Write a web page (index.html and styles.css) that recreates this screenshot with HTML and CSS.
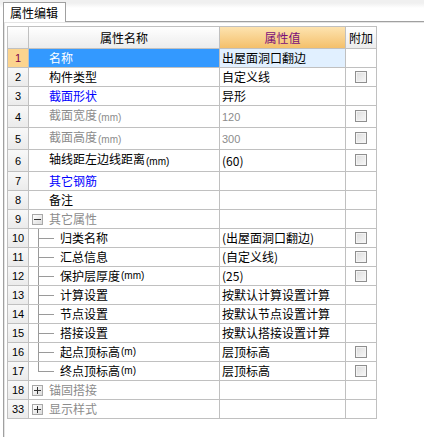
FILE: index.html
```html
<!DOCTYPE html>
<html lang="zh">
<head>
<meta charset="utf-8">
<title>属性编辑</title>
<link rel="stylesheet" href="styles.css">
</head>
<body>
<div class="tabbar">
  <div class="tab">属性编辑</div>
</div>
<div class="panel">
  <table class="grid">
    <colgroup>
      <col class="c-num"><col class="c-name"><col class="c-val"><col class="c-add">
    </colgroup>
    <thead>
      <tr>
        <th class="num"></th>
        <th class="hname">属性名称</th>
        <th class="hval">属性值</th>
        <th class="hadd">附加</th>
      </tr>
    </thead>
    <tbody>
      <tr class="sel">
        <td class="num">1</td><td class="name">名称</td><td class="val">出屋面洞口翻边</td><td class="add"></td>
      </tr>
      <tr>
        <td class="num">2</td><td class="name">构件类型</td><td class="val">自定义线</td><td class="add"><span class="chk"></span></td>
      </tr>
      <tr>
        <td class="num">3</td><td class="name blue">截面形状</td><td class="val">异形</td><td class="add"></td>
      </tr>
      <tr>
        <td class="num">4</td><td class="name grey">截面宽度<span class="unit">(mm)</span></td><td class="val grey">120</td><td class="add"><span class="chk"></span></td>
      </tr>
      <tr>
        <td class="num">5</td><td class="name grey">截面高度<span class="unit">(mm)</span></td><td class="val grey">300</td><td class="add"><span class="chk"></span></td>
      </tr>
      <tr>
        <td class="num">6</td><td class="name">轴线距左边线距离<span class="unit">(mm)</span></td><td class="val paren">(60)</td><td class="add"><span class="chk"></span></td>
      </tr>
      <tr>
        <td class="num">7</td><td class="name blue">其它钢筋</td><td class="val"></td><td class="add"></td>
      </tr>
      <tr>
        <td class="num">8</td><td class="name">备注</td><td class="val"></td><td class="add"></td>
      </tr>
      <tr>
        <td class="num">9</td><td class="group"><span class="box minus"></span><span class="grey">其它属性</span></td><td class="val"></td><td class="add"></td>
      </tr>
      <tr>
        <td class="num">10</td><td class="child"><span class="branch"></span>归类名称</td><td class="val paren">(出屋面洞口翻边)</td><td class="add"><span class="chk"></span></td>
      </tr>
      <tr>
        <td class="num">11</td><td class="child"><span class="branch"></span>汇总信息</td><td class="val paren">(自定义线)</td><td class="add"><span class="chk"></span></td>
      </tr>
      <tr>
        <td class="num">12</td><td class="child"><span class="branch"></span>保护层厚度<span class="unit">(mm)</span></td><td class="val paren">(25)</td><td class="add"><span class="chk"></span></td>
      </tr>
      <tr>
        <td class="num">13</td><td class="child"><span class="branch"></span>计算设置</td><td class="val">按默认计算设置计算</td><td class="add"></td>
      </tr>
      <tr>
        <td class="num">14</td><td class="child"><span class="branch"></span>节点设置</td><td class="val">按默认节点设置计算</td><td class="add"></td>
      </tr>
      <tr>
        <td class="num">15</td><td class="child"><span class="branch"></span>搭接设置</td><td class="val">按默认搭接设置计算</td><td class="add"></td>
      </tr>
      <tr>
        <td class="num">16</td><td class="child"><span class="branch"></span>起点顶标高<span class="unit">(m)</span></td><td class="val">层顶标高</td><td class="add"><span class="chk"></span></td>
      </tr>
      <tr>
        <td class="num">17</td><td class="child"><span class="branch last"></span>终点顶标高<span class="unit">(m)</span></td><td class="val">层顶标高</td><td class="add"><span class="chk"></span></td>
      </tr>
      <tr>
        <td class="num">18</td><td class="group"><span class="box plus"></span><span class="grey">锚固搭接</span></td><td class="val"></td><td class="add"></td>
      </tr>
      <tr>
        <td class="num">33</td><td class="group"><span class="box plus"></span><span class="grey">显示样式</span></td><td class="val"></td><td class="add"></td>
      </tr>
    </tbody>
  </table>
</div>
</body>
</html>
```

FILE: styles.css
```css
html, body {
  margin: 0;
  padding: 0;
  background: #ffffff;
}

body {
  width: 424px;
  height: 437px;
  overflow: hidden;
  font-family: "Liberation Sans", "Noto Sans CJK SC", sans-serif;
  font-size: 12px;
  color: #000000;
}

.tabbar {
  height: 21px;
  background: linear-gradient(#f0f0f0 0, #f0f0f0 3px, #ffffff 8px);
  display: flex;
  align-items: flex-end;
  padding-left: 3px;
}

.tab {
  height: 20px;
  box-sizing: border-box;
  width: 63px;
  border: 1px solid #a0a0a0;
  border-bottom: none;
  background: #ffffff;
  font-family: "Noto Sans CJK SC", sans-serif;
  font-size: 12px;
  line-height: 19px;
  padding-left: 6px;
  position: relative;
  top: 1px;
}

.panel {
  margin-left: 3px;
  border-top: 1px solid #a0a0a0;
  border-left: 1px solid #a0a0a0;
  box-shadow: inset 1px 1px 0 #e4e4e4;
  padding: 4px 0 0 3px;
  height: 420px;
}

.grid {
  table-layout: fixed;
  border-collapse: separate;
  border-spacing: 1px;
  background: #c0c0c0;
  width: 370px;
}

.c-num { width: 20px; }
.c-name { width: 190px; }
.c-val { width: 125px; }
.c-add { width: 30px; }

.grid th,
.grid td {
  padding: 0;
  height: 18px;
  line-height: 18px;
  white-space: nowrap;
  overflow: hidden;
  background: #ffffff;
  font-weight: normal;
}

.grid thead th {
  height: 21px;
  line-height: 21px;
  font-family: "Noto Sans CJK SC", sans-serif;
  background: linear-gradient(#ffffff, #ececec);
  text-align: center;
}

.grid thead th.hval {
  background: linear-gradient(#fde3b0, #f4c06b);
  color: #7a0f7a;
}

.grid td.num {
  text-align: center;
  font-size: 11px;
  background: linear-gradient(#f8f8f8, #ebebeb);
}

.grid td.name {
  padding-left: 20px;
  font-family: "Noto Sans CJK SC", sans-serif;
}

.grid td.val {
  padding-left: 2px;
  font-family: "Noto Sans CJK SC", sans-serif;
}

.grid td.val.grey {
  font-family: "Liberation Sans", sans-serif;
  font-size: 11px;
}

.grid td.add {
  text-align: center;
}

.unit {
  font-family: "Liberation Sans", sans-serif;
  font-size: 10px;
  margin-left: 1px;
  vertical-align: -1px;
}

.blue { color: #0000ff; }
.grey { color: #8c8c8c; }

.grid tr.sel td.num {
  background: #fcd48e;
  color: #80004a;
}

.grid tr.sel td.name {
  background: #3399ff;
  color: #ffffff;
}

.grid tr.sel td.val {
  background: #e1f0ff;
}

.grid td.group {
  display: flex;
  align-items: center;
  padding-left: 3px;
  font-family: "Noto Sans CJK SC", sans-serif;
}

.box {
  width: 11px;
  height: 11px;
  box-sizing: border-box;
  border: 1px solid #a8a8a8;
  background: linear-gradient(135deg, #ffffff, #dcdcdc);
  margin-right: 6px;
  position: relative;
}

.box::before {
  content: "";
  position: absolute;
  left: 1px;
  top: 4px;
  width: 7px;
  height: 1px;
  background: #333333;
}

.box.plus::after {
  content: "";
  position: absolute;
  left: 4px;
  top: 1px;
  width: 1px;
  height: 7px;
  background: #333333;
}

.grid td.child {
  display: flex;
  align-items: center;
  padding-left: 9px;
  font-family: "Noto Sans CJK SC", sans-serif;
}

.branch {
  width: 16px;
  height: 19px;
  margin-right: 6px;
  background:
    linear-gradient(#9a9a9a, #9a9a9a) 0 0 / 1px 19px no-repeat,
    linear-gradient(#9a9a9a, #9a9a9a) 0 9px / 16px 1px no-repeat;
}

.branch.last {
  background:
    linear-gradient(#9a9a9a, #9a9a9a) 0 0 / 1px 10px no-repeat,
    linear-gradient(#9a9a9a, #9a9a9a) 0 9px / 16px 1px no-repeat;
}

.chk {
  display: inline-block;
  vertical-align: middle;
  width: 12px;
  height: 12px;
  box-sizing: border-box;
  border: 1px solid #8f8f8f;
  background: linear-gradient(135deg, #dcdcdc, #f8f8f8);
  box-shadow: inset 0 0 0 1px #f4f4f4;
  margin-top: -2px;
}
```
